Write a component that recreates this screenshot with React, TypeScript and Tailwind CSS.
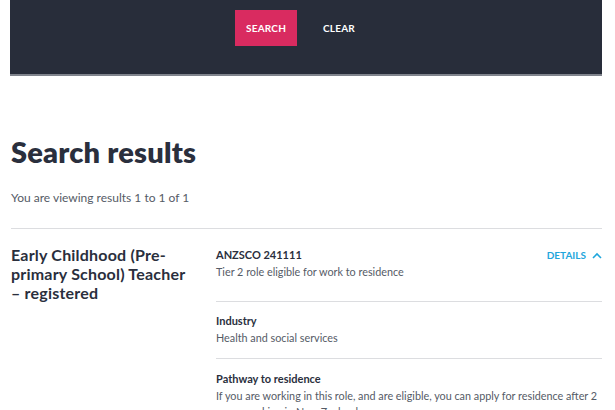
export default function App() {
  return (
    <div className="w-[615px] h-[410px] overflow-hidden bg-white text-[#2a2f3d]" style={{ fontFamily: 'Lato, "Noto Sans", sans-serif' }}>
      <div className="ml-[10px] mr-[13px] h-[76px] bg-[#282d3a] border-b-2 border-[#80848d] flex justify-center items-start pt-[10px] pr-[22px] gap-[26px]">
        <button className="w-[62px] h-[36px] bg-[#d92b60] text-white text-[10px] font-bold tracking-[0.2px]">SEARCH</button>
        <button className="h-[36px] text-white text-[10px] font-bold tracking-[0.2px]">CLEAR</button>
      </div>

      <div className="pl-[11px] pr-[13px]">
        <h1 className="mt-[58px] text-[29px] leading-[36px] font-extrabold tracking-[0.2px]">Search results</h1>
        <p className="mt-[20px] text-[12px] leading-[16px] text-[#555b66]">You are viewing results 1 to 1 of 1</p>

        <div className="mt-[22px] border-t border-[#dcdde0] flex">
          <div className="w-[205px] shrink-0 pt-[16px] pr-[14px]">
            <h2 className="max-w-[176px] text-[16px] leading-[19px] font-bold tracking-[0.2px]">
              Early Childhood (Pre-primary School) Teacher – registered
            </h2>
          </div>
          <div className="flex-1 pt-[18px]">
            <div className="flex justify-between items-start pb-[21px] border-b border-[#dcdde0]">
              <div>
                <div className="text-[11px] leading-[16px] font-bold">ANZSCO 241111</div>
                <div className="mt-[1px] text-[10.8px] leading-[16px] text-[#555b66]">Tier 2 role eligible for work to residence</div>
              </div>
              <button className="mt-[1px] flex items-center gap-[6px] text-[10px] font-bold text-[#1fa6dc]">
                DETAILS
                <svg width="10" height="7" viewBox="0 0 10 7" fill="none" stroke="currentColor" strokeWidth="1.6">
                  <path d="M1 6l4-4 4 4" />
                </svg>
              </button>
            </div>
            <div className="pt-[11px] pb-[12px] border-b border-[#dcdde0]">
              <div className="text-[11px] leading-[16px] font-bold">Industry</div>
              <div className="mt-[1px] text-[10.8px] leading-[16px] text-[#555b66]">Health and social services</div>
            </div>
            <div className="pt-[12px]">
              <div className="text-[11px] leading-[16px] font-bold">Pathway to residence</div>
              <div className="mt-[1px] text-[10.8px] leading-[16px] text-[#555b66]">
                If you are working in this role, and are eligible, you can apply for residence after 2 years working in New Zealand.
              </div>
            </div>
          </div>
        </div>
      </div>
    </div>
  );
}
